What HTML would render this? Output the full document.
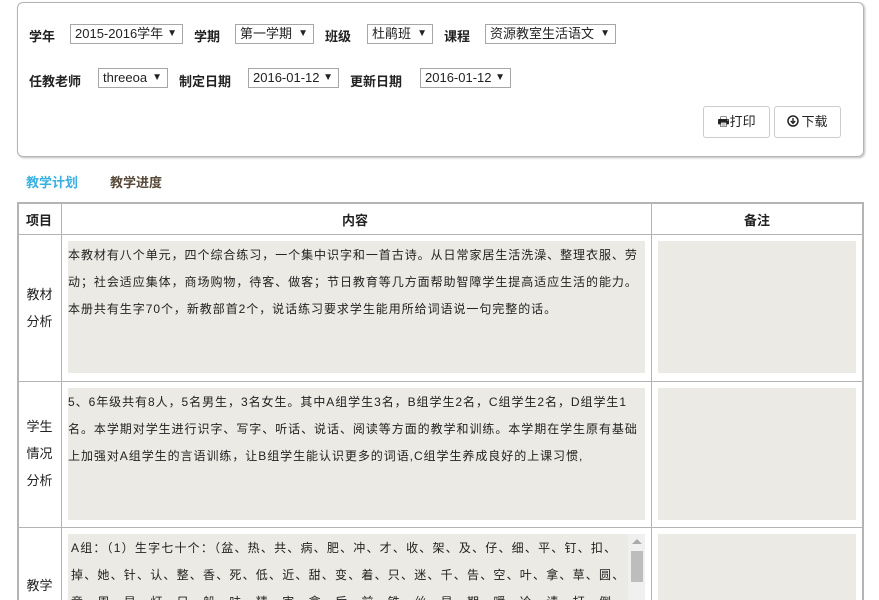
<!DOCTYPE html>
<html><head><meta charset="utf-8"><style>
*{margin:0;padding:0;box-sizing:border-box}
body{width:879px;height:600px;overflow:hidden;background:#fff;font-family:"Liberation Sans","Noto Sans CJK SC",sans-serif;font-size:13px;color:#222;position:relative}
.a{position:absolute}
.panel{left:17px;top:2px;width:847px;height:155px;border:1px solid #b4b4b4;border-radius:6px;box-shadow:1px 1px 2px #bbb}
.lb{font-weight:bold;font-size:13px;color:#222}
.sel{border:1px solid #a6a6a6;height:20px;font-size:13px;line-height:18px;padding-left:4px;color:#222;background:#fff}
.sel:after{content:"▼";position:absolute;right:5px;top:0;font-size:10px}
.btn{border:1px solid #ccc;border-radius:3px;height:32px;line-height:30px;font-size:13px;text-align:center;background:#fff}
.tab{font-weight:bold;font-size:13px}
.ln{background:#b4b4b4}
.ta{background:#ebeae4;font-size:12px;line-height:27px;color:#222;overflow:hidden;white-space:nowrap;letter-spacing:0.95px}
.rl{font-size:13px;line-height:27px;width:43px;text-align:center}
</style></head><body>
<div class="a panel"></div>
<div class="a lb" style="left:29px;top:26px">学年</div>
<div class="a sel" style="left:70px;top:24px;width:113px">2015-2016学年</div>
<div class="a lb" style="left:194px;top:26px">学期</div>
<div class="a sel" style="left:235px;top:24px;width:79px">第一学期</div>
<div class="a lb" style="left:325px;top:26px">班级</div>
<div class="a sel" style="left:367px;top:24px;width:66px">杜鹃班</div>
<div class="a lb" style="left:444px;top:26px">课程</div>
<div class="a sel" style="left:485px;top:24px;width:131px">资源教室生活语文</div>
<div class="a lb" style="left:29px;top:71px">任教老师</div>
<div class="a sel" style="left:98px;top:68px;width:70px">threeoa</div>
<div class="a lb" style="left:179px;top:71px">制定日期</div>
<div class="a sel" style="left:248px;top:68px;width:91px">2016-01-12</div>
<div class="a lb" style="left:350px;top:71px">更新日期</div>
<div class="a sel" style="left:420px;top:68px;width:91px">2016-01-12</div>
<div class="a btn" style="left:703px;top:106px;width:67px">&#x1F5B6;打印</div>
<div class="a btn" style="left:774px;top:106px;width:67px"><svg width="12" height="12" viewBox="0 0 12 12" style="vertical-align:-1px;margin-right:2px"><circle cx="6" cy="6" r="5" fill="none" stroke="#222" stroke-width="1.5"/><path d="M6 3v5M3.8 6l2.2 2.3L8.2 6" fill="none" stroke="#222" stroke-width="1.4"/></svg>下载</div>
<div class="a tab" style="left:26px;top:172px;color:#3ab0e0">教学计划</div>
<div class="a tab" style="left:110px;top:172px;color:#5a4a3a">教学进度</div>

<div class="a ln" style="left:17px;top:202px;width:847px;height:2px"></div>
<div class="a ln" style="left:17px;top:202px;width:2px;height:398px"></div>
<div class="a ln" style="left:862px;top:202px;width:2px;height:398px"></div>
<div class="a ln" style="left:61px;top:202px;width:1px;height:398px"></div>
<div class="a ln" style="left:651px;top:202px;width:1px;height:398px"></div>
<div class="a ln" style="left:17px;top:234px;width:847px;height:1px"></div>
<div class="a ln" style="left:17px;top:381px;width:847px;height:1px"></div>
<div class="a ln" style="left:17px;top:527px;width:847px;height:1px"></div>

<div class="a lb" style="left:26px;top:210px">项目</div>
<div class="a lb" style="left:342px;top:210px">内容</div>
<div class="a lb" style="left:744px;top:210px">备注</div>

<div class="a rl" style="left:18px;top:281px">教材<br>分析</div>
<div class="a rl" style="left:18px;top:413px">学生<br>情况<br>分析</div>
<div class="a rl" style="left:18px;top:572px">教学</div>

<div class="a ta" style="left:68px;top:241px;width:577px;height:132px;padding-top:1px">本教材有八个单元，四个综合练习，一个集中识字和一首古诗。从日常家居生活洗澡、整理衣服、劳<br>动；社会适应集体，商场购物，待客、做客；节日教育等几方面帮助智障学生提高适应生活的能力。<br>本册共有生字70个，新教部首2个，说话练习要求学生能用所给词语说一句完整的话。</div>
<div class="a ta" style="left:658px;top:241px;width:198px;height:132px"></div>
<div class="a ta" style="left:68px;top:388px;width:577px;height:132px;padding-top:1px">5、6年级共有8人，5名男生，3名女生。其中A组学生3名，B组学生2名，C组学生2名，D组学生1<br>名。本学期对学生进行识字、写字、听话、说话、阅读等方面的教学和训练。本学期在学生原有基础<br>上加强对A组学生的言语训练，让B组学生能认识更多的词语,C组学生养成良好的上课习惯,</div>
<div class="a ta" style="left:658px;top:388px;width:198px;height:132px"></div>
<div class="a ta" style="left:68px;top:534px;width:560px;height:66px;padding-top:1px;padding-left:3px;letter-spacing:1.2px">A组：（1）生字七十个：（盆、热、共、病、肥、冲、才、收、架、及、仔、细、平、钉、扣、<br>掉、她、针、认、整、香、死、低、近、甜、变、着、只、迷、千、告、空、叶、拿、草、圆、<br>竟、周、是、灯、只、船、味、精、害、拿、后、前、铁、丝、是、期、暖、冷、请、打、倒</div>
<div class="a" style="left:628px;top:534px;width:17px;height:66px;background:#f0f0f0"></div>
<div class="a" style="left:631px;top:551px;width:12px;height:31px;background:#bdbdbd"></div>
<div class="a" style="left:632px;top:539px;width:0;height:0;border-left:5px solid transparent;border-right:5px solid transparent;border-bottom:5px solid #aaa"></div>
<div class="a ta" style="left:658px;top:534px;width:198px;height:66px"></div>
</body></html>
